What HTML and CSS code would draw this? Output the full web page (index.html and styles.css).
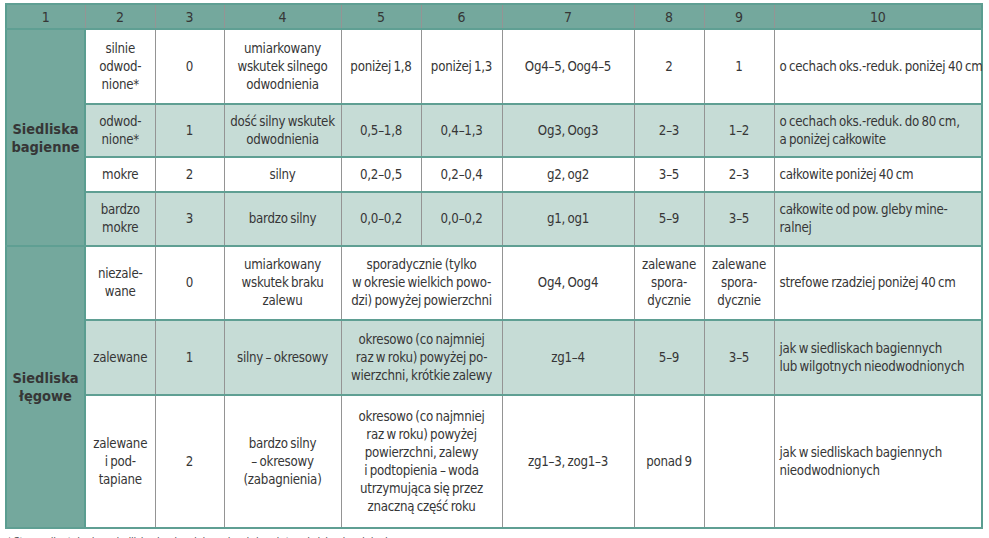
FILE: index.html
```html
<!DOCTYPE html>
<html lang="pl">
<head>
<meta charset="utf-8">
<link rel="stylesheet" href="styles.css">
</head>
<body>
<div class="page">
<table class="tbl">
<colgroup>
<col class="c1"><col class="c2"><col class="c3"><col class="c4"><col class="c5"><col class="c6"><col class="c7"><col class="c8"><col class="c9"><col class="c10">
</colgroup>
<thead>
<tr class="head">
<th>1</th><th>2</th><th>3</th><th>4</th><th>5</th><th>6</th><th>7</th><th>8</th><th>9</th><th>10</th>
</tr>
</thead>
<tbody>
<tr class="r1 white">
<td class="group" rowspan="4">Siedliska<br>bagienne</td>
<td>silnie<br>odwod-<br>nione*</td>
<td>0</td>
<td>umiarkowany<br>wskutek silnego<br>odwodnienia</td>
<td>poniżej 1,8</td>
<td>poniżej 1,3</td>
<td>Og4–5, Oog4–5</td>
<td>2</td>
<td>1</td>
<td class="left">o cechach oks.-reduk. poniżej 40 cm</td>
</tr>
<tr class="r2 tint">
<td>odwod-<br>nione*</td>
<td>1</td>
<td>dość silny wskutek<br>odwodnienia</td>
<td>0,5–1,8</td>
<td>0,4–1,3</td>
<td>Og3, Oog3</td>
<td>2–3</td>
<td>1–2</td>
<td class="left">o cechach oks.-reduk. do 80 cm,<br>a poniżej całkowite</td>
</tr>
<tr class="r3 white">
<td>mokre</td>
<td>2</td>
<td>silny</td>
<td>0,2–0,5</td>
<td>0,2–0,4</td>
<td>g2, og2</td>
<td>3–5</td>
<td>2–3</td>
<td class="left">całkowite poniżej 40 cm</td>
</tr>
<tr class="r4 tint sep">
<td>bardzo<br>mokre</td>
<td>3</td>
<td>bardzo silny</td>
<td>0,0–0,2</td>
<td>0,0–0,2</td>
<td>g1, og1</td>
<td>5–9</td>
<td>3–5</td>
<td class="left">całkowite od pow. gleby mine-<br>ralnej</td>
</tr>
<tr class="r5 white">
<td class="group" rowspan="3">Siedliska<br>łęgowe</td>
<td>niezale-<br>wane</td>
<td>0</td>
<td>umiarkowany<br>wskutek braku<br>zalewu</td>
<td colspan="2">sporadycznie (tylko<br>w okresie wielkich powo-<br>dzi) powyżej powierzchni</td>
<td>Og4, Oog4</td>
<td>zalewane<br>spora-<br>dycznie</td>
<td>zalewane<br>spora-<br>dycznie</td>
<td class="left">strefowe rzadziej poniżej 40 cm</td>
</tr>
<tr class="r6 tint">
<td>zalewane</td>
<td>1</td>
<td>silny – okresowy</td>
<td colspan="2">okresowo (co najmniej<br>raz w roku) powyżej po-<br>wierzchni, krótkie zalewy</td>
<td>zg1–4</td>
<td>5–9</td>
<td>3–5</td>
<td class="left">jak w siedliskach bagiennych<br>lub wilgotnych nieodwodnionych</td>
</tr>
<tr class="r7 white">
<td>zalewane<br>i pod-<br>tapiane</td>
<td>2</td>
<td>bardzo silny<br>– okresowy<br>(zabagnienia)</td>
<td colspan="2">okresowo (co najmniej<br>raz w roku) powyżej<br>powierzchni, zalewy<br>i podtopienia – woda<br>utrzymująca się przez<br>znaczną część roku</td>
<td>zg1–3, zog1–3</td>
<td>ponad 9</td>
<td></td>
<td class="left">jak w siedliskach bagiennych<br>nieodwodnionych</td>
</tr>
</tbody>
</table>
<p class="note">* Stan uwilgotnienia w siedliskach odwodnionych zależy od stopnia ich odwodnienia</p>
</div>
</body>
</html>
```

FILE: styles.css
```css
html, body {
  margin: 0;
  padding: 0;
  background: #ffffff;
}

.page {
  padding: 3px 8px 0 5px;
  font-family: "DejaVu Sans Condensed", "Liberation Sans Narrow", "Liberation Sans", sans-serif;
  font-stretch: condensed;
  color: #363636;
  font-size: 13.2px;
  line-height: 18px;
  letter-spacing: -0.25px;
  word-spacing: -1px;
}

.tbl {
  border-collapse: collapse;
  table-layout: fixed;
  width: 976px;
  border: 2px solid #5a9d90;
}

.c1 { width: 79px; }
.c2 { width: 70px; }
.c3 { width: 69px; }
.c4 { width: 117px; }
.c5 { width: 80px; }
.c6 { width: 81px; }
.c7 { width: 132px; }
.c8 { width: 70px; }
.c9 { width: 70px; }
.c10 { width: 208px; }

.tbl th,
.tbl td {
  border-left: 1px solid #949494;
  border-right: 1px solid #949494;
  border-top: 2px solid #5f9f93;
  border-bottom: 2px solid #5f9f93;
  text-align: center;
  vertical-align: middle;
  padding: 2px 2px;
  white-space: nowrap;
}

.head th {
  background: #74a89d;
  font-weight: normal;
  height: 21px;
  padding: 1px 2px;
  font-size: 14px;
}

.white td { background: #ffffff; }
.tint td { background: #c6dcd6; }

.tbl td.group {
  background: #74a89d;
  font-weight: bold;
  font-size: 14.5px;
  letter-spacing: 0;
  border-right: 2px solid #5a9d90;
}

.tbl td.left {
  text-align: left;
  padding-left: 5px;
}

.r1 { height: 75px; }
.r2 { height: 53px; }
.r3 { height: 35px; }
.r4 { height: 54px; }
.r5 { height: 74px; }
.r6 { height: 75px; }
.r7 { height: 133px; }

.note {
  margin: 6px 0 0 2px;
  font-size: 11px;
  line-height: 14px;
  color: #555;
  white-space: nowrap;
}
```
